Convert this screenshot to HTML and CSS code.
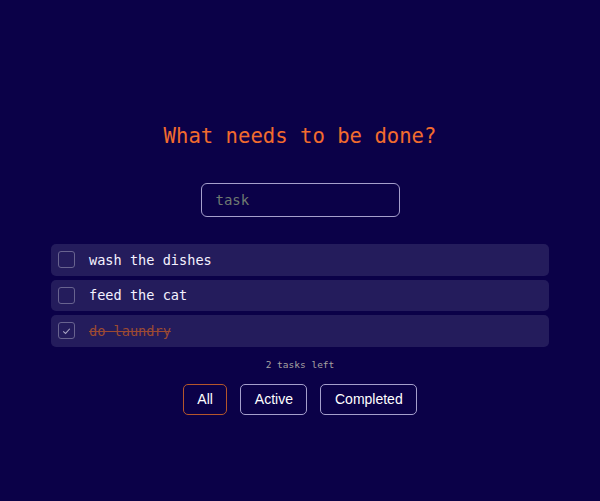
FILE: index.html
```html
<!DOCTYPE html>
<html>
<head>
<meta charset="utf-8">
<link rel="stylesheet" href="styles.css">
</head>
<body>
<main class="app">
  <h1 class="title">What needs to be done?</h1>
  <input class="task-input" type="text" placeholder="task">
  <ul class="list">
    <li class="item"><span class="check"></span><span class="label">wash the dishes</span></li>
    <li class="item"><span class="check"></span><span class="label">feed the cat</span></li>
    <li class="item done"><span class="check"><svg viewBox="0 0 16 16" width="16" height="16"><path d="M4.5 8.3 L7 10.6 L11.5 5.6" fill="none" stroke="#a9a6c4" stroke-width="1.1"/></svg></span><span class="label">do laundry</span></li>
  </ul>
  <p class="count">2 tasks left</p>
  <div class="filters">
    <button class="btn active">All</button>
    <button class="btn">Active</button>
    <button class="btn">Completed</button>
  </div>
</main>
</body>
</html>
```
FILE: styles.css
```css
html, body {
  margin: 0;
  padding: 0;
  background: #0b0148;
  height: 100%;
}
.app {
  width: 498px;
  margin: 0 auto;
  padding-top: 124px;
  display: flex;
  flex-direction: column;
  align-items: center;
  font-family: "DejaVu Sans Mono", "Liberation Mono", monospace;
}
.title {
  margin: 0;
  font-size: 20.6px;
  line-height: 24px;
  font-weight: normal;
  color: #f26b2e;
}
.task-input {
  margin-top: 35px;
  box-sizing: border-box;
  width: 199px;
  height: 34px;
  border: 1px solid #a59fcc;
  border-radius: 6px;
  background: transparent;
  padding: 0 14px;
  font-family: "DejaVu Sans Mono", monospace;
  font-size: 14px;
  color: #e8e8f0;
  outline: none;
}
.task-input::placeholder {
  color: #6f7a70;
}
.list {
  list-style: none;
  margin: 27px 0 0;
  padding: 0;
  width: 100%;
  display: flex;
  flex-direction: column;
  gap: 4px;
}
.item {
  height: 31.5px;
  background: #241c5c;
  border-radius: 5px;
  display: flex;
  align-items: center;
  padding-left: 7px;
}
.check {
  box-sizing: border-box;
  width: 17px;
  height: 17px;
  border: 1px solid #68638f;
  border-radius: 3px;
  display: flex;
  align-items: center;
  justify-content: center;
  flex-shrink: 0;
}
.check svg {
  display: block;
}
.label {
  margin-left: 14px;
  font-size: 13.6px;
  color: #f4f2ff;
}
.done .label {
  color: #9c4a33;
  text-decoration: line-through;
}
.count {
  margin: 12px 0 0;
  font-size: 9.5px;
  line-height: 12px;
  color: #a7a1a0;
}
.filters {
  margin-top: 13px;
  display: flex;
  gap: 13px;
}
.btn {
  box-sizing: border-box;
  height: 31px;
  padding: 0 13.5px;
  border: 1px solid #a59fcc;
  border-radius: 5px;
  background: transparent;
  color: #ffffff;
  font-family: "Liberation Sans", Arial, sans-serif;
  font-size: 14px;
}
.btn.active {
  border-color: #b4572b;
}
```
